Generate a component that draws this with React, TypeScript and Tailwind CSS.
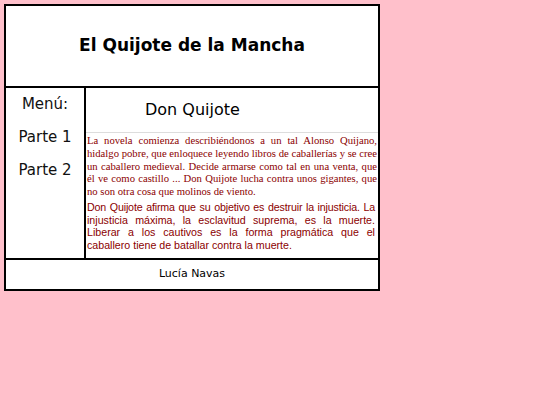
const segundo = [
  'injusticia máxima, la esclavitud suprema, es la muerte.',
  'Liberar a los cautivos es la forma pragmática que el',
];

export default function App() {
  return (
    <div className="min-h-[405px] w-full bg-[#ffc0cb] pt-[4px] pl-[4px]">
      <div className="w-[376px] border-2 border-black bg-white font-['DejaVu_Sans',sans-serif] text-black">
        <header className="flex h-[82px] items-center justify-center border-b-2 border-black">
          <h1 className="text-[17px] font-bold">El Quijote de la Mancha</h1>
        </header>

        <div className="flex h-[170px]">
          <nav className="flex w-[80px] shrink-0 flex-col items-center border-r-2 border-black pt-[6px] text-[#111]">
            <p className="h-[33px] text-[15px] leading-[20px]">Menú:</p>
            <p className="h-[33px] text-[15px] leading-[20px]">Parte 1</p>
            <p className="h-[33px] text-[15px] leading-[20px]">Parte 2</p>
          </nav>

          <main className="min-w-0 flex-1">
            <div className="flex h-[45px] items-center border-b border-[#dddddd] pl-[59px]">
              <h2 className="text-[16px]">Don Quijote</h2>
            </div>
            <div className="pl-[1px] pr-[1px] pt-[1px] text-[#8b0000]">
              <p className="text-justify font-['Liberation_Serif',serif] text-[10.67px] leading-[12.8px]">
                La novela comienza describiéndonos a un tal Alonso Quijano, hidalgo pobre, que enloquece leyendo libros de caballerías y se cree un caballero medieval. Decide armarse como tal en una venta, que él ve como castillo ... Don Quijote lucha contra unos gigantes, que no son otra cosa que molinos de viento.
              </p>
              <p className="mt-[3px] pr-[2px] font-['Liberation_Sans',sans-serif] text-[10.67px] leading-[12.6px]">
                <span className="block whitespace-nowrap text-justify tracking-[-0.15px] [text-align-last:justify]">
                  Don Quijote afirma que su objetivo es destruir la injusticia. La
                </span>
                {segundo.map((linea, i) => (
                  <span key={i} className="block whitespace-nowrap text-justify [text-align-last:justify]">
                    {linea}
                  </span>
                ))}
                <span className="block">caballero tiene de batallar contra la muerte.</span>
              </p>
            </div>
          </main>
        </div>

        <footer className="flex h-[31px] items-center justify-center border-t-2 border-black">
          <p className="text-[11px]">Lucía Navas</p>
        </footer>
      </div>
    </div>
  );
}
